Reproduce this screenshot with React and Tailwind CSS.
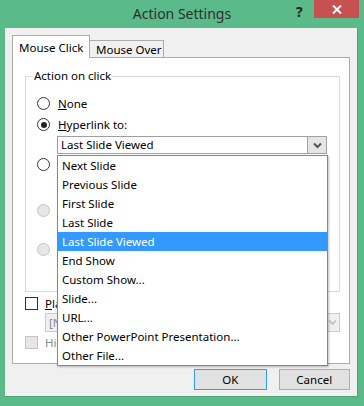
import React from "react";

const items = [
  "Next Slide",
  "Previous Slide",
  "First Slide",
  "Last Slide",
  "Last Slide Viewed",
  "End Show",
  "Custom Show...",
  "Slide...",
  "URL...",
  "Other PowerPoint Presentation...",
  "Other File...",
];

const Radio = ({ checked, disabled }) => (
  <span
    className={`flex h-[13px] w-[13px] shrink-0 items-center justify-center rounded-full border ${
      disabled ? "border-[#c4c4c4] bg-[#e6e6e6]" : "border-[#333] bg-white"
    }`}
  >
    {checked && <span className="h-[6px] w-[6px] rounded-full bg-[#222]"></span>}
  </span>
);

const Chevron = ({ color = "#555" }) => (
  <svg width="9" height="7" viewBox="0 0 9 7">
    <path d="M1 1.5 L4.5 5 L8 1.5" fill="none" stroke={color} strokeWidth="2" />
  </svg>
);

const App = () => {
  return (
    <div
      className="flex h-[406px] w-[364px] flex-col whitespace-nowrap bg-[#5aba89] text-[11.5px] text-black"
      style={{ fontFamily: '"Noto Sans", "Liberation Sans", sans-serif' }}
    >
      {/* title bar */}
      <div className="relative flex h-[28px] shrink-0 items-center justify-center">
        <span className="mt-[-2px] text-[14px] text-[#2e2e2e]">Action Settings</span>
        <span className="absolute left-[296px] top-[1px] text-[14px] font-bold text-[#222]">?</span>
        <div className="absolute left-[314px] top-0 flex h-[18px] w-[45px] items-center justify-center bg-[#c75050]">
          <svg width="10" height="9" viewBox="0 0 10 9">
            <path d="M1 0.5 L9 8.5 M9 0.5 L1 8.5" stroke="#fff" strokeWidth="2" />
          </svg>
        </div>
      </div>

      {/* window body */}
      <div className="mx-[5px] mr-[6px] mb-[9px] flex flex-1 flex-col border-r border-b border-[#4ea677] bg-[#f0f0f0] px-[7px] pt-[7px]">
        {/* tabs */}
        <div className="flex h-[22px] items-end">
          <div className="relative z-10 mb-[-1px] flex h-[23px] w-[78px] items-start border border-b-0 border-[#acacac] bg-white pl-[6px] pt-[3px]">
            Mouse Click
          </div>
          <div className="flex h-[17px] w-[74px] items-center border border-b-0 border-l-0 border-[#acacac] bg-[#f0f0f0] pl-[6px] pt-[1px]">
            Mouse Over
          </div>
        </div>

        {/* tab panel */}
        <div className="relative h-[307px] w-[338px] border border-[#acacac] bg-white pl-[12px] pt-[18px]">
          {/* group box */}
          <div className="relative h-[216px] w-[315px] border border-[#dcdcdc] pl-[11px] pt-[20px]">
            <span className="absolute left-[7px] top-[-10px] bg-white px-[1px] leading-[18px]">
              Action on click
            </span>

            <div className="flex h-[13px] items-center gap-[8px]">
              <Radio />
              <span>
                <span className="underline">N</span>one
              </span>
            </div>
            <div className="mt-[8px] flex h-[13px] items-center gap-[8px]">
              <Radio checked />
              <span>
                <span className="underline">H</span>yperlink to:
              </span>
            </div>

            {/* combobox */}
            <div className="mt-[5px] ml-[20px] flex h-[18px] w-[270px] items-center border border-[#a0a0a0] bg-white">
              <span className="flex-1 pl-[3px] leading-none">Last Slide Viewed</span>
              <span className="flex h-full w-[19px] items-center justify-center border-l border-[#a0a0a0] bg-[#e5e5e5]">
                <Chevron />
              </span>
            </div>

            <div className="mt-[4px] flex h-[13px] items-center">
              <Radio />
            </div>
            <div className="mt-[33px] flex h-[13px] items-center">
              <Radio disabled />
            </div>
            <div className="mt-[26px] flex h-[13px] items-center">
              <Radio disabled />
            </div>
          </div>

          {/* sound */}
          <div className="mt-[5px] flex h-[13px] items-center gap-[7px]">
            <span className="h-[13px] w-[13px] border border-[#333] bg-white"></span>
            <span>
              <span className="underline">P</span>lay sound:
            </span>
          </div>
          <div className="mt-[3px] ml-[20px] flex h-[19px] w-[295px] items-center border border-[#cccccc] bg-[#f0f0f0]">
            <span className="flex-1 pl-[3px] leading-none text-[#8a8a8a]">[No Sound]</span>
            <span className="flex h-full w-[13px] items-center justify-center">
              <Chevron color="#c8c8c8" />
            </span>
          </div>
          <div className="mt-[4px] flex h-[13px] items-center gap-[7px]">
            <span className="h-[13px] w-[13px] border border-[#c4c4c4] bg-[#e6e6e6]"></span>
            <span className="text-[#8a8a8a]">Highlight click</span>
          </div>

          {/* open dropdown list */}
          <div className="absolute left-[44px] top-[97px] z-20 w-[271px] border border-[#828790] bg-white shadow-[1px_1px_2px_rgba(0,0,0,0.25)]">
            {items.map((t) => (
              <div
                key={t}
                className={`flex h-[19px] items-center pl-[4px] ${
                  t === "Last Slide Viewed" ? "bg-[#3399ff] text-white" : ""
                }`}
              >
                {t}
              </div>
            ))}
          </div>
        </div>

        {/* dialog buttons */}
        <div className="mt-[5px] flex gap-[12px] pl-[182px]">
          <button className="flex h-[21px] w-[73px] items-center justify-center border border-[#3399ff] bg-[#e1e1e1]">
            OK
          </button>
          <button className="flex h-[21px] w-[72px] items-center justify-center border border-[#adadad] bg-[#e1e1e1]">
            Cancel
          </button>
        </div>
      </div>
    </div>
  );
};

export default App;
